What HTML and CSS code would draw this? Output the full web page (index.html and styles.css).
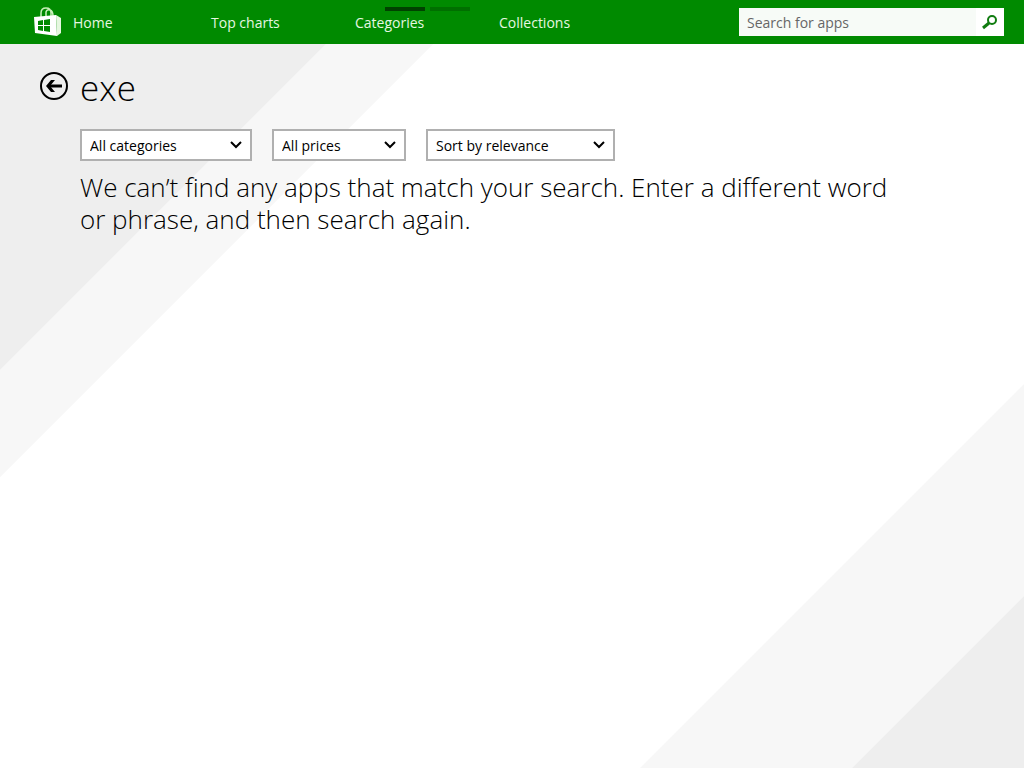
FILE: index.html
```html
<!DOCTYPE html>
<html lang="en">
<head>
    <meta charset="utf-8">
    <title>Store</title>
    <link rel="stylesheet" href="styles.css">
</head>
<body>
    <header class="topbar">
        <nav class="nav">
            <a class="home" href="#">
                <svg class="logo" width="28" height="30" viewBox="0 0 28 30">
                    <path d="M7 10V6q0-5 5-5t5 5v3M12 9V5q1-3 4-2 3 1 3 6" fill="none" stroke="#c8f0b8" stroke-width="1.5"/>
                    <path d="M0 10l22-2 1 21-22-3z" fill="#fff"/>
                    <path d="M22 8l5 3v15l-4 3z" fill="#e6f7e0"/>
                    <path d="M4 14l5-1v5H4zM10 13l6-1v6h-6zM4 19h5v5l-5-1zM10 19h6v6l-6-1z" fill="#008a00"/>
                </svg>
                Home
            </a>
            <a href="#">Top charts</a>
            <a href="#">Categories</a>
            <a href="#">Collections</a>
        </nav>
        <form class="search">
            <input type="text" placeholder="Search for apps" aria-label="Search for apps">
            <button type="button" aria-label="Search">
                <svg width="16" height="16" viewBox="0 0 16 16" fill="none" stroke="#107c10">
                    <circle cx="10" cy="6" r="4" stroke-width="2"/>
                    <path d="M7 9l-6 5" stroke-width="3"/>
                </svg>
            </button>
        </form>
        <div class="pager"><span></span><span></span></div>
    </header>

    <main class="content">
        <div class="title">
            <button type="button" class="back" aria-label="Back">
                <svg width="28" height="28" viewBox="0 0 28 28" fill="none" stroke="#000">
                    <circle cx="14" cy="14" r="13" stroke-width="2"/>
                    <path d="M22 14H8" stroke-width="3"/>
                    <path d="M11 8h4l-5 6 5 6h-4l-5-6z" fill="#000" stroke="none"/>
                </svg>
            </button>
            <h1>exe</h1>
        </div>
        <div class="filters">
            <select class="category" aria-label="Category">
                <option>All categories</option>
            </select>
            <select class="price" aria-label="Price">
                <option>All prices</option>
            </select>
            <select class="sort" aria-label="Sort">
                <option>Sort by relevance</option>
            </select>
        </div>
        <p class="message">We can’t find any apps that match your search. Enter a different word or phrase, and then search again.</p>
    </main>
</body>
</html>
```
FILE: styles.css
```css
* {
    box-sizing: border-box;
}
body {
    margin: 0;
    min-height: 100vh;
    font-family: "Open Sans", "Noto Sans", sans-serif;
    font-size: 14px;
    color: #000;
    background:
        linear-gradient(135deg, #eee 261px, #f7f7f7 262px, #f7f7f7 337px, transparent 338px),
        linear-gradient(315deg, #eee 121px, #f7f7f7 122px, #f7f7f7 271px, transparent 272px),
        #fff;
}
.topbar {
    position: relative;
    display: flex;
    align-items: center;
    justify-content: space-between;
    height: 44px;
    padding: 0 20px 0 34px;
    background: #008a00;
}
.nav {
    display: grid;
    grid-template-columns: 177px 144px 144px auto;
    align-items: center;
}
.nav a {
    color: #e6f7e0;
    text-decoration: none;
}
.nav .home {
    display: flex;
    align-items: center;
    gap: 11px;
}
.search {
    display: flex;
    width: 265px;
    height: 28px;
    background: #f7fbf7;
}
.search input {
    flex: 1;
    min-width: 0;
    padding: 0 8px;
    border: 0;
    background: none;
    font: inherit;
}
.search input::placeholder {
    color: #666;
}
.search button {
    display: flex;
    align-items: center;
    justify-content: center;
    width: 28px;
    padding: 0;
    border: 0;
    background: #fff;
}
/* page indicator over the top edge */
.pager {
    position: absolute;
    top: 7px;
    left: 385px;
    display: flex;
    gap: 5px;
}
.pager span {
    width: 40px;
    height: 4px;
    background: #004200;
}
.pager span + span {
    background: #006f00;
}
.content {
    padding: 28px 40px 40px 80px;
}
.title {
    display: flex;
    align-items: flex-start;
    gap: 12px;
    margin-left: -40px;
}
.back {
    display: flex;
    padding: 0;
    border: 0;
    background: none;
}
.title h1 {
    margin: 0;
    font-size: 35px;
    font-weight: 300;
    line-height: 32px;
}
.filters {
    display: flex;
    gap: 20px;
    margin: 25px 0 10px;
}
.filters select {
    height: 32px;
    padding: 0 8px;
    border: 2px solid #b0b0b0;
    border-radius: 0;
    appearance: none;
    font: inherit;
    color: #000;
    background: #fff url("data:image/svg+xml,%3Csvg xmlns='http://www.w3.org/2000/svg' width='14' height='10'%3E%3Cpath d='M2 2l5 5 5-5' fill='none' stroke='%23000' stroke-width='2'/%3E%3C/svg%3E") no-repeat right 7px center;
}
.category {
    width: 172px;
}
.price {
    width: 134px;
}
.sort {
    width: 189px;
}
.message {
    max-width: 820px;
    margin: 0;
    font-size: 26px;
    font-weight: 300;
    line-height: 32px;
}
```
